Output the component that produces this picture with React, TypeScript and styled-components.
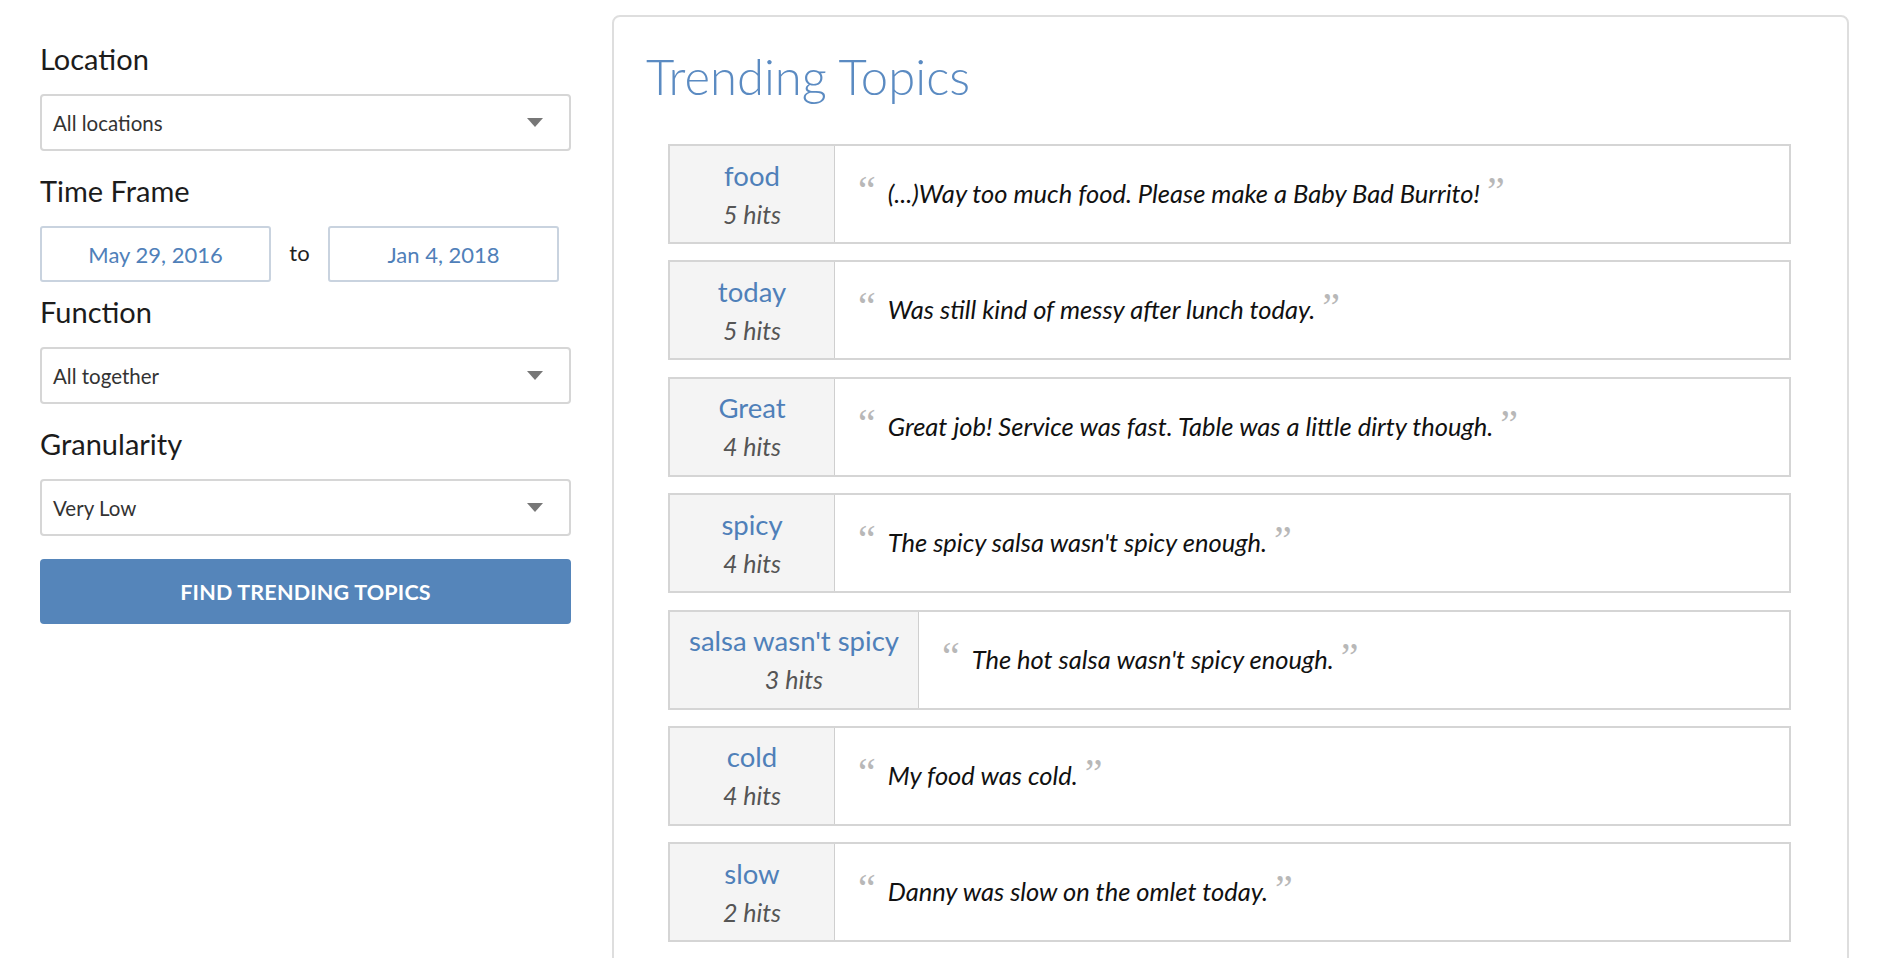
import styled, { createGlobalStyle } from "styled-components";

const GlobalStyle = createGlobalStyle`
  * {
    box-sizing: border-box;
  }
  body {
    margin: 0;
    background: #ffffff;
    font-family: Lato, "Open Sans", sans-serif;
    color: #222;
    overflow: hidden;
  }
`;

const BLUE = "#4f80b9";

const Page = styled.div`
  display: flex;
  align-items: flex-start;
  gap: 41px;
  padding: 15px 32px 0 40px;
`;

const Sidebar = styled.aside`
  width: 531px;
  flex-shrink: 0;
  padding-top: 27px;
`;

const FieldGroup = styled.div<{ tight?: boolean }>`
  margin-bottom: ${(p) => (p.tight ? "13px" : "23px")};
`;

const Label = styled.div`
  font-size: 29px;
  line-height: 34px;
  margin-bottom: 18px;
  color: #1c1c1c;
`;

const Select = styled.div`
  display: flex;
  align-items: center;
  justify-content: space-between;
  height: 57px;
  padding: 0 26px 0 11px;
  border: 2px solid #d6d6d6;
  border-radius: 4px;
  font-size: 20.5px;
  color: #333;
`;

const Caret = styled.span`
  width: 0;
  height: 0;
  border-left: 8px solid transparent;
  border-right: 8px solid transparent;
  border-top: 9px solid #777;
`;

const DateRow = styled.div`
  display: flex;
  align-items: center;
`;

const DateBox = styled.div`
  width: 231px;
  height: 56px;
  display: flex;
  align-items: center;
  justify-content: center;
  border: 2px solid #c9d3df;
  border-radius: 3px;
  font-size: 22px;
  color: ${BLUE};
`;

const To = styled.span`
  width: 57px;
  text-align: center;
  font-size: 22px;
  color: #222;
  margin-top: -4px;
`;

const FindButton = styled.button`
  display: block;
  width: 100%;
  height: 65px;
  margin-top: 4px;
  border: none;
  border-radius: 4px;
  background: #5585ba;
  color: #fff;
  font-family: Lato, sans-serif;
  font-size: 21.5px;
  font-weight: 700;
  letter-spacing: 0.2px;
  text-transform: uppercase;
`;

const Panel = styled.section`
  flex: 1;
  border: 2px solid #dedede;
  border-radius: 8px;
  padding: 31px 32px 60px 32px;
  min-height: 1000px;
`;

const Title = styled.h1`
  margin: 0 0 40px 0;
  font-size: 49px;
  line-height: 56px;
  font-weight: 300;
  color: #5b8bc2;
`;

const RowList = styled.div`
  display: flex;
  flex-direction: column;
  gap: 16.4px;
  margin: 0 24px 0 22px;
`;

const Row = styled.div`
  display: flex;
  height: 100px;
  border: 2px solid #d5d5d5;
`;

const TopicCell = styled.div`
  min-width: 165px;
  padding: 0 19px;
  display: flex;
  flex-direction: column;
  align-items: center;
  justify-content: center;
  background: #f4f4f4;
  border-right: 1px solid #cfcfcf;
`;

const Topic = styled.div`
  font-size: 27.5px;
  line-height: 32px;
  color: ${BLUE};
  white-space: nowrap;
`;

const Hits = styled.div`
  margin-top: 7px;
  font-size: 25px;
  line-height: 30px;
  font-style: italic;
  color: #555;
`;

const QuoteCell = styled.div`
  flex: 1;
  display: flex;
  align-items: center;
  padding: 0 0 2px 23px;
  background: #fff;
`;

const Quote = styled.p`
  margin: 0;
  font-size: 25.5px;
  font-style: italic;
  color: #111;
`;

const Mark = styled.span<{ open?: boolean }>`
  font-family: "Liberation Serif", serif;
  font-style: normal;
  font-size: 40px;
  color: #b8b8b8;
  line-height: 0;
  vertical-align: -1px;
  margin: ${(p) => (p.open ? "0 12px 0 0" : "0 0 0 7px")};
`;

const topics = [
  { name: "food", hits: 5, quote: "(...)Way too much food. Please make a Baby Bad Burrito!" },
  { name: "today", hits: 5, quote: "Was still kind of messy after lunch today." },
  { name: "Great", hits: 4, quote: "Great job! Service was fast. Table was a little dirty though." },
  { name: "spicy", hits: 4, quote: "The spicy salsa wasn't spicy enough." },
  { name: "salsa wasn't spicy", hits: 3, quote: "The hot salsa wasn't spicy enough." },
  { name: "cold", hits: 4, quote: "My food was cold." },
  { name: "slow", hits: 2, quote: "Danny was slow on the omlet today." },
];

const App = () => {
  return (
    <>
      <GlobalStyle />
      <Page>
        <Sidebar>
          <FieldGroup>
            <Label>Location</Label>
            <Select>
              All locations
              <Caret />
            </Select>
          </FieldGroup>
          <FieldGroup tight>
            <Label>Time Frame</Label>
            <DateRow>
              <DateBox>May 29, 2016</DateBox>
              <To>to</To>
              <DateBox>Jan 4, 2018</DateBox>
            </DateRow>
          </FieldGroup>
          <FieldGroup>
            <Label>Function</Label>
            <Select>
              All together
              <Caret />
            </Select>
          </FieldGroup>
          <FieldGroup>
            <Label>Granularity</Label>
            <Select>
              Very Low
              <Caret />
            </Select>
          </FieldGroup>
          <FindButton>Find Trending Topics</FindButton>
        </Sidebar>

        <Panel>
          <Title>Trending Topics</Title>
          <RowList>
            {topics.map((t) => (
              <Row key={t.name}>
                <TopicCell>
                  <Topic>{t.name}</Topic>
                  <Hits>{`${t.hits} hits`}</Hits>
                </TopicCell>
                <QuoteCell>
                  <Quote>
                    <Mark open>{"\u201C"}</Mark>
                    {t.quote}
                    <Mark>{"\u201D"}</Mark>
                  </Quote>
                </QuoteCell>
              </Row>
            ))}
          </RowList>
        </Panel>
      </Page>
    </>
  );
};

export default App;
